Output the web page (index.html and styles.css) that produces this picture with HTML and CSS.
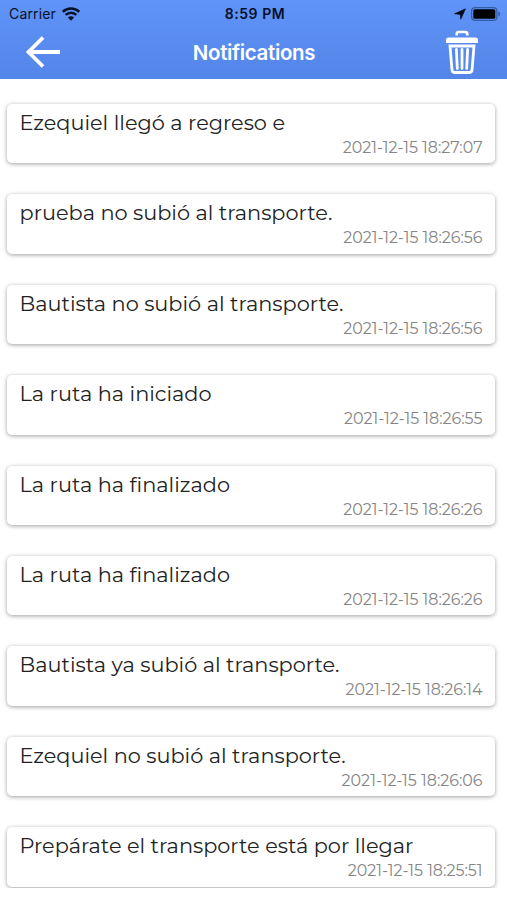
FILE: index.html
```
<!DOCTYPE html>
<html lang="es">
<head>
  <meta charset="UTF-8" />
  <meta name="viewport" content="width=device-width, initial-scale=1.0" />
  <title>Notifications</title>
  <link rel="stylesheet" href="styles.css">
</head>
<body>
  <header class="header">
    <div class="status-bar">
      <div class="carrier">
        <span>Carrier</span>
        <svg width="18" height="14" viewBox="0 0 18 14">
          <path d="M.8 4.800C5.300.4 12.700.4 17.200 4.800M3.700 7.900c2.900-2.900 7.700-2.900 10.600 0" fill="none" stroke="#06102a" stroke-width="2.500" />
          <path d="M9 13.800 5.900 10.600c1.700-1.700 4.500-1.700 6.200 0z" fill="#06102a" />
        </svg>
      </div>
      <span class="clock">8:59 PM</span>
      <div class="indicators">
        <svg width="12" height="12" viewBox="0 0 12 12">
          <path d="M11.500.8 6.800 11.200 6.200 6.400.5 5.800z" fill="#050b18" stroke="#050b18" stroke-width=".6" stroke-linejoin="round" />
        </svg>
        <svg width="30" height="14" viewBox="0 0 30 14">
          <rect x=".6" y=".6" width="25.300" height="12.800" rx="3.500" fill="none" stroke="#345ba8" stroke-width="1.200" />
          <rect x="2.300" y="2.300" width="22" height="9.400" rx="1.500" fill="#000" />
          <path d="M27.300 4.500c2.400 1 2.400 4 0 5z" fill="#345ba8" />
        </svg>
      </div>
    </div>
    <div class="nav-bar">
      <button class="icon-button" aria-label="Volver">
        <svg width="36" height="34" viewBox="0 0 36 34">
          <path d="M18 2.500 3.500 17 18 31.500M3.500 17H35" fill="none" stroke="#fff" stroke-width="3.800" />
        </svg>
      </button>
      <h1>Notifications</h1>
      <button class="icon-button" aria-label="Borrar">
        <svg width="34" height="45" viewBox="0 0 34 45">
          <path d="M11.700 5.500V4q0-2 2-2h6.600q2 0 2 2v1.500" fill="none" stroke="#fff" stroke-width="2.600" />
          <path d="M3.500 7.500h27q2.500 0 2.500 2.500V13H1V10Q1 7.500 3.500 7.500z" fill="#fff" />
          <path d="M5 16 7 40q.3 2.500 3 2.500h14q2.700 0 3-2.500l2-24z" fill="none" stroke="#fff" stroke-width="2.800" />
          <path d="m11.400 19.500.9 19M17 19.500v19M22.600 19.500l-.9 19" fill="none" stroke="#fff" stroke-width="2.800" stroke-linecap="round" />
        </svg>
      </button>
    </div>
  </header>

  <main class="list">
    <article class="card">
      <p>Ezequiel llegó a regreso e</p>
      <time>2021-12-15 18:27:07</time>
    </article>
    <article class="card">
      <p>prueba no subió al transporte.</p>
      <time>2021-12-15 18:26:56</time>
    </article>
    <article class="card">
      <p>Bautista no subió al transporte.</p>
      <time>2021-12-15 18:26:56</time>
    </article>
    <article class="card">
      <p>La ruta ha iniciado</p>
      <time>2021-12-15 18:26:55</time>
    </article>
    <article class="card">
      <p>La ruta ha finalizado</p>
      <time>2021-12-15 18:26:26</time>
    </article>
    <article class="card">
      <p>La ruta ha finalizado</p>
      <time>2021-12-15 18:26:26</time>
    </article>
    <article class="card">
      <p>Bautista ya subió al transporte.</p>
      <time>2021-12-15 18:26:14</time>
    </article>
    <article class="card">
      <p>Ezequiel no subió al transporte.</p>
      <time>2021-12-15 18:26:06</time>
    </article>
    <article class="card">
      <p>Prepárate el transporte está por llegar</p>
      <time>2021-12-15 18:25:51</time>
    </article>
  </main>
</body>
</html>
```
FILE: styles.css
```
* {
  box-sizing: border-box;
}

body {
  margin: 0;
  height: 900px;
  overflow: hidden;
  background: #fff;
  font-family: Montserrat, Inter, sans-serif;
}

.header {
  height: 79px;
  background: linear-gradient(#6094f8, #5485e8);
  font-family: Inter, sans-serif;
}

.status-bar {
  display: grid;
  grid-template-columns: 1fr auto 1fr;
  align-items: center;
  height: 27px;
  padding: 0 6px 0 9px;
  font-size: 14px;
  color: #06102a;
}

.carrier {
  display: flex;
  align-items: center;
  gap: 6px;
  letter-spacing: 0.15px;
}

.clock {
  font-size: 14px;
  font-weight: 600;
  letter-spacing: 0.55px;
}

.indicators {
  display: flex;
  justify-content: flex-end;
  align-items: center;
  gap: 5px;
}

.nav-bar {
  display: flex;
  justify-content: space-between;
  align-items: center;
  height: 50px;
  padding: 0 28px 0 25px;
}

h1 {
  margin: 0;
  padding-left: 2px;
  font-size: 20.5px;
  font-weight: 600;
  letter-spacing: -0.35px;
  color: #fff;
}

.icon-button {
  display: flex;
  padding: 0;
  border: none;
  background: none;
}

.list {
  display: flex;
  flex-direction: column;
  gap: 31px;
  height: 809px;
  padding: 25px 12px 0 7px;
  overflow: hidden;
}

.card {
  display: flex;
  flex-direction: column;
  flex-shrink: 0;
  height: 59.4px;
  padding: 5px 12.5px 0;
  border-radius: 5px;
  background: #fff;
  box-shadow: 0 1px 4px rgba(0, 0, 0, 0.38);
}

.card p {
  margin: 0;
  font-size: 20.85px;
  line-height: 27px;
  color: #222;
  white-space: nowrap;
  font-variant-ligatures: none;
}

.card time {
  align-self: flex-end;
  font-size: 15.9px;
  line-height: 24px;
  color: #858585;
}
```
